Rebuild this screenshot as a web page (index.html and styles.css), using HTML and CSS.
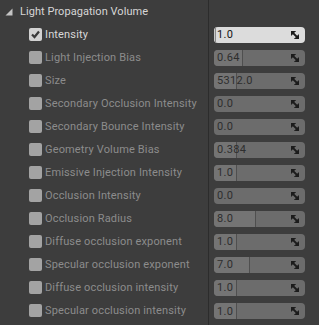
FILE: index.html
```html
<!DOCTYPE html>
<html>
<head>
<meta charset="utf-8">
<link rel="stylesheet" href="styles.css">
</head>
<body>
<div class="panel">
  <div class="row header">
    <div class="left">
      <svg class="arrow" width="8" height="8" viewBox="0 0 8 8"><polygon points="7.5,0.5 7.5,7.5 0.5,7.5" fill="#c4c4c4"/></svg>
      <span class="title">Light Propagation Volume</span>
    </div>
    <div class="right"></div>
  </div>

  <div class="row">
    <div class="left"><span class="cb on"><svg width="13" height="13" viewBox="0 0 13 13"><polyline points="3,6.5 5.5,9 10,3.5" fill="none" stroke="#3a3a3a" stroke-width="2.2"/></svg></span><span class="label on">Intensity</span></div>
    <div class="right"><div class="field on"><span class="fill" style="width:1px"></span><span class="val">1.0</span><svg class="spin" width="8" height="8" viewBox="0 0 8 8"><polygon points="0,0 4.5,0 0,4.5"/><polygon points="8,8 3.5,8 8,3.5"/><line x1="1" y1="1" x2="7" y2="7" stroke-width="1.8"/></svg></div></div>
  </div>

  <div class="row">
    <div class="left"><span class="cb"></span><span class="label">Light Injection Bias</span></div>
    <div class="right"><div class="field"><span class="fill" style="width:28px"></span><span class="val">0.64</span><svg class="spin" width="8" height="8" viewBox="0 0 8 8"><polygon points="0,0 4.5,0 0,4.5"/><polygon points="8,8 3.5,8 8,3.5"/><line x1="1" y1="1" x2="7" y2="7" stroke-width="1.8"/></svg></div></div>
  </div>

  <div class="row">
    <div class="left"><span class="cb"></span><span class="label">Size</span></div>
    <div class="right"><div class="field"><span class="fill" style="width:22px"></span><span class="val">5312.0</span><svg class="spin" width="8" height="8" viewBox="0 0 8 8"><polygon points="0,0 4.5,0 0,4.5"/><polygon points="8,8 3.5,8 8,3.5"/><line x1="1" y1="1" x2="7" y2="7" stroke-width="1.8"/></svg></div></div>
  </div>

  <div class="row">
    <div class="left"><span class="cb"></span><span class="label">Secondary Occlusion Intensity</span></div>
    <div class="right"><div class="field"><span class="val">0.0</span><svg class="spin" width="8" height="8" viewBox="0 0 8 8"><polygon points="0,0 4.5,0 0,4.5"/><polygon points="8,8 3.5,8 8,3.5"/><line x1="1" y1="1" x2="7" y2="7" stroke-width="1.8"/></svg></div></div>
  </div>

  <div class="row">
    <div class="left"><span class="cb"></span><span class="label">Secondary Bounce Intensity</span></div>
    <div class="right"><div class="field"><span class="val">0.0</span><svg class="spin" width="8" height="8" viewBox="0 0 8 8"><polygon points="0,0 4.5,0 0,4.5"/><polygon points="8,8 3.5,8 8,3.5"/><line x1="1" y1="1" x2="7" y2="7" stroke-width="1.8"/></svg></div></div>
  </div>

  <div class="row">
    <div class="left"><span class="cb"></span><span class="label">Geometry Volume Bias</span></div>
    <div class="right"><div class="field"><span class="fill" style="width:22px"></span><span class="val">0.384</span><svg class="spin" width="8" height="8" viewBox="0 0 8 8"><polygon points="0,0 4.5,0 0,4.5"/><polygon points="8,8 3.5,8 8,3.5"/><line x1="1" y1="1" x2="7" y2="7" stroke-width="1.8"/></svg></div></div>
  </div>

  <div class="row">
    <div class="left"><span class="cb"></span><span class="label">Emissive Injection Intensity</span></div>
    <div class="right"><div class="field"><span class="fill" style="width:22px"></span><span class="val">1.0</span><svg class="spin" width="8" height="8" viewBox="0 0 8 8"><polygon points="0,0 4.5,0 0,4.5"/><polygon points="8,8 3.5,8 8,3.5"/><line x1="1" y1="1" x2="7" y2="7" stroke-width="1.8"/></svg></div></div>
  </div>

  <div class="row">
    <div class="left"><span class="cb"></span><span class="label">Occlusion Intensity</span></div>
    <div class="right"><div class="field"><span class="val">0.0</span><svg class="spin" width="8" height="8" viewBox="0 0 8 8"><polygon points="0,0 4.5,0 0,4.5"/><polygon points="8,8 3.5,8 8,3.5"/><line x1="1" y1="1" x2="7" y2="7" stroke-width="1.8"/></svg></div></div>
  </div>

  <div class="row">
    <div class="left"><span class="cb"></span><span class="label">Occlusion Radius</span></div>
    <div class="right"><div class="field"><span class="fill" style="width:41px"></span><span class="val">8.0</span><svg class="spin" width="8" height="8" viewBox="0 0 8 8"><polygon points="0,0 4.5,0 0,4.5"/><polygon points="8,8 3.5,8 8,3.5"/><line x1="1" y1="1" x2="7" y2="7" stroke-width="1.8"/></svg></div></div>
  </div>

  <div class="row">
    <div class="left"><span class="cb"></span><span class="label">Diffuse occlusion exponent</span></div>
    <div class="right"><div class="field"><span class="fill" style="width:22px"></span><span class="val">1.0</span><svg class="spin" width="8" height="8" viewBox="0 0 8 8"><polygon points="0,0 4.5,0 0,4.5"/><polygon points="8,8 3.5,8 8,3.5"/><line x1="1" y1="1" x2="7" y2="7" stroke-width="1.8"/></svg></div></div>
  </div>

  <div class="row">
    <div class="left"><span class="cb"></span><span class="label">Specular occlusion exponent</span></div>
    <div class="right"><div class="field"><span class="fill" style="width:35px"></span><span class="val">7.0</span><svg class="spin" width="8" height="8" viewBox="0 0 8 8"><polygon points="0,0 4.5,0 0,4.5"/><polygon points="8,8 3.5,8 8,3.5"/><line x1="1" y1="1" x2="7" y2="7" stroke-width="1.8"/></svg></div></div>
  </div>

  <div class="row">
    <div class="left"><span class="cb"></span><span class="label">Diffuse occlusion intensity</span></div>
    <div class="right"><div class="field"><span class="fill" style="width:22px"></span><span class="val">1.0</span><svg class="spin" width="8" height="8" viewBox="0 0 8 8"><polygon points="0,0 4.5,0 0,4.5"/><polygon points="8,8 3.5,8 8,3.5"/><line x1="1" y1="1" x2="7" y2="7" stroke-width="1.8"/></svg></div></div>
  </div>

  <div class="row">
    <div class="left"><span class="cb"></span><span class="label">Specular occlusion intensity</span></div>
    <div class="right"><div class="field"><span class="fill" style="width:22px"></span><span class="val">1.0</span><svg class="spin" width="8" height="8" viewBox="0 0 8 8"><polygon points="0,0 4.5,0 0,4.5"/><polygon points="8,8 3.5,8 8,3.5"/><line x1="1" y1="1" x2="7" y2="7" stroke-width="1.8"/></svg></div></div>
  </div>
</div>
</body>
</html>
```

FILE: styles.css
```css
html, body {
  margin: 0;
  padding: 0;
  background: #3d3d3d;
}
body {
  width: 319px;
  height: 325px;
  overflow: hidden;
  font-family: Roboto, "Liberation Sans", sans-serif;
  font-size: 11px;
}
.panel {
  display: flex;
  flex-direction: column;
  height: 325px;
}
.row {
  display: grid;
  grid-template-columns: 209px 1fr;
  height: 23px;
}
.row:last-child {
  flex: 1;
  align-items: start;
}
.left {
  display: flex;
  align-items: center;
  border-right: 1px solid #2c2c2c;
  padding-left: 29px;
  gap: 3px;
  height: 100%;
  box-sizing: border-box;
  overflow: hidden;
  white-space: nowrap;
}
.row:last-child .left, .row:last-child .right {
  height: 100%;
}
.row:last-child .left {
  align-items: flex-start;
  padding-top: 5px;
}
.row:last-child .right {
  padding-top: 4px;
  align-items: flex-start;
}
.header .left {
  padding-left: 5px;
  gap: 7px;
}
.arrow {
  flex: none;
  margin-top: 1px;
}
.title {
  color: #d6d6d6;
  font-size: 11px;
  letter-spacing: 0.05px;
}
.right {
  display: flex;
  align-items: center;
  padding-left: 5px;
}
.cb {
  flex: none;
  width: 13px;
  height: 13px;
  border-radius: 2px;
  background: #a3a3a3;
  display: block;
}
.cb.on {
  background: #d2d2d2;
}
.cb svg {
  display: block;
}
.label {
  color: #8c8c8c;
  letter-spacing: 0.15px;
}
.label.on {
  color: #d8d8d8;
}
.field {
  position: relative;
  width: 91px;
  height: 16px;
  border-radius: 4px;
  background: #6c6c6c;
  overflow: hidden;
  display: flex;
  align-items: center;
}
.field.on {
  background: #dcdcdc;
}
.fill {
  position: absolute;
  left: 0;
  top: 0;
  bottom: 0;
  background: #747474;
  border-right: 1px solid #4f4f4f;
}
.field.on .fill {
  background: #c8c8c8;
  border-right: 1px solid #8a8a8a;
}
.val {
  position: relative;
  padding-left: 3px;
  color: #2e2e2e;
  font-size: 11px;
  letter-spacing: 0.3px;
}
.field.on .val {
  color: #141414;
}
.spin {
  position: absolute;
  right: 6px;
  top: 4px;
  fill: #1c1c1c;
  stroke: #1c1c1c;
}
```
